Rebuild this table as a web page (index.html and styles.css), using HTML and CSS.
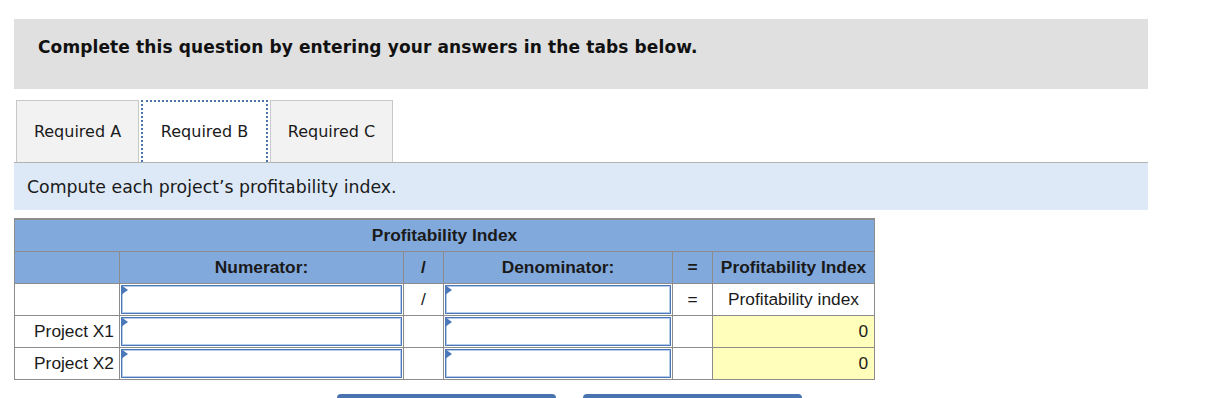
FILE: index.html
```html
<!DOCTYPE html>
<html lang="en">
<head>
  <meta charset="UTF-8">
  <title>Profitability Index</title>
  <link rel="stylesheet" href="styles.css">
</head>
<body>
  <div class="page">
    <div class="notice">Complete this question by entering your answers in the tabs below.</div>

    <div class="tabs">
      <div class="tab">Required A</div>
      <div class="tab active">Required B</div>
      <div class="tab">Required C</div>
    </div>

    <div class="prompt">Compute each project’s profitability index.</div>

    <table class="grid">
      <colgroup>
        <col style="width:105px">
        <col style="width:284px">
        <col style="width:40px">
        <col style="width:229px">
        <col style="width:40px">
        <col style="width:162px">
      </colgroup>
      <tr class="head">
        <th colspan="6">Profitability Index</th>
      </tr>
      <tr class="head">
        <th></th>
        <th>Numerator:</th>
        <th>/</th>
        <th>Denominator:</th>
        <th>=</th>
        <th>Profitability Index</th>
      </tr>
      <tr>
        <td></td>
        <td class="entry"><div class="field"></div></td>
        <td class="op">/</td>
        <td class="entry"><div class="field"></div></td>
        <td class="op">=</td>
        <td class="center">Profitability index</td>
      </tr>
      <tr>
        <td class="label">Project X1</td>
        <td class="entry"><div class="field"></div></td>
        <td></td>
        <td class="entry"><div class="field"></div></td>
        <td></td>
        <td class="result">0</td>
      </tr>
      <tr>
        <td class="label">Project X2</td>
        <td class="entry"><div class="field"></div></td>
        <td></td>
        <td class="entry"><div class="field"></div></td>
        <td></td>
        <td class="result">0</td>
      </tr>
    </table>

    <div class="nav">
      <div class="nav-btn"></div>
      <div class="nav-btn"></div>
    </div>
  </div>
</body>
</html>
```

FILE: styles.css
```css
html, body {
  margin: 0;
  padding: 0;
  background: #fff;
  color: #111;
}

.page {
  width: 1134px;
  margin-left: 14px;
  padding-top: 19px;
  font-family: "DejaVu Sans", Verdana, sans-serif;
}

.notice {
  height: 70px;
  box-sizing: border-box;
  padding: 18px 0 0 24px;
  background: #e0e0e0;
  font-size: 17px;
  font-weight: bold;
  letter-spacing: 0.12px;
}

.tabs {
  display: flex;
  gap: 2px;
  margin-top: 11px;
  padding-left: 2px;
  border-bottom: 1px solid #b3b3b3;
}

.tab {
  width: 123px;
  height: 62px;
  box-sizing: border-box;
  border: 1px solid #c8c8c8;
  border-bottom: none;
  background: #f2f2f2;
  font-size: 16px;
  text-align: center;
  line-height: 62px;
  color: #1a1a1a;
}

.tab.active {
  width: 127px;
  background: #fff;
  border: 2px dotted #4a74b0;
  border-bottom: none;
  line-height: 60px;
}

.prompt {
  height: 47px;
  box-sizing: border-box;
  padding: 14px 0 0 13px;
  background: #dde9f6;
  font-size: 13pt;
  color: #1a1a1a;
}

.grid {
  margin-top: 8px;
  width: 861px;
  table-layout: fixed;
  border-collapse: collapse;
  font-family: "Liberation Sans", Arial, sans-serif;
  font-size: 13pt;
  color: #1a1a1a;
}

.grid th,
.grid td {
  height: 32px;
  padding: 0;
  border: 1px solid #8c8c8c;
  box-sizing: border-box;
}

.grid tr:first-child th {
  border-top: 2px solid #8c8c8c;
}

.grid th {
  background: #82a9dc;
  font-weight: bold;
  text-align: center;
}

.grid .op,
.grid .center {
  text-align: center;
}

.grid .label {
  text-align: right;
  padding-right: 5px;
}

.grid .result {
  background: #ffffbb;
  text-align: right;
  padding-right: 6px;
}

.grid .entry {
  padding: 1px;
}

.field {
  position: relative;
  height: 29px;
  box-sizing: border-box;
  border: 1px solid #4a78b8;
  box-shadow: inset 0 0 0 1px #b6cbe9;
  background: #fff;
}

/* small marker in the top-left corner of each entry box */
.field::before {
  content: "";
  position: absolute;
  left: -1px;
  top: -1px;
  border-top: 5px solid transparent;
  border-bottom: 5px solid transparent;
  border-left: 7px solid #4a78b8;
}

.nav {
  display: flex;
  gap: 27px;
  margin: 14px 0 0 323px;
}

.nav-btn {
  width: 219px;
  height: 20px;
  background: #4a74b0;
  border-radius: 4px 4px 0 0;
}
```
